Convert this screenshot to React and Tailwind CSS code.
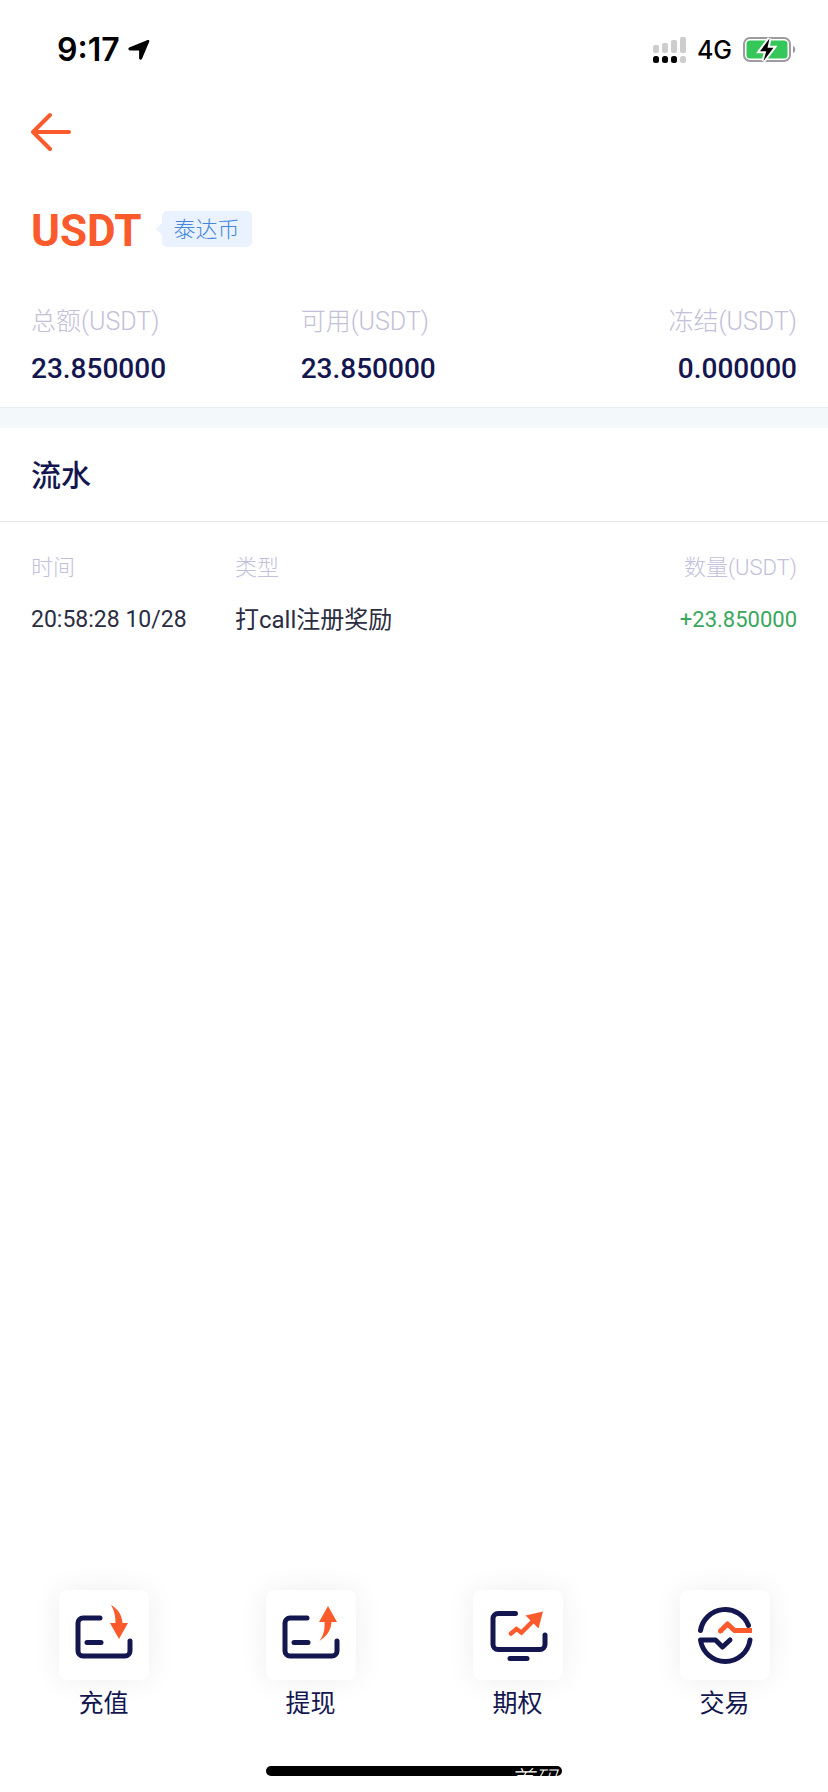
import React from 'react';

const NAVY = '#14174f';
const ORANGE = '#fb5a2c';

const StatusBar = () => (
  <div className="flex h-[98px] items-center justify-between pt-0.5 pr-[32px] pl-[57px]">
    <div className="flex items-center gap-2">
      <span className="font-[Inter,sans-serif] text-[32px] leading-9 font-semibold text-black">9:17</span>
      <svg width="22" height="22" viewBox="0 0 22 22" fill="#000">
        <path d="M1.2 8.400 19.600 1.100c1.200-.5 2.100.4 1.600 1.600l-7.200 17.100c-.6 1.400-2.900 1.200-2.900-.5v-7.800H2c-1.800 0-2.100-2.500-.8-3.100z" />
      </svg>
    </div>
    <div className="flex items-center gap-2.5">
      <svg width="34" height="28" viewBox="0 0 34 28">
        <g fill="#cdcdcd">
          <rect x="0" y="9" width="6" height="8" rx="2" />
          <rect x="9" y="7" width="6" height="10" rx="2" />
          <rect x="18" y="4" width="6" height="13" rx="2" />
          <rect x="27" y="1" width="6" height="16" rx="2" />
          <rect x="27" y="20" width="6" height="7" rx="2.500" />
        </g>
        <g fill="#000">
          <rect x="0" y="20" width="6" height="7" rx="2.500" />
          <rect x="9" y="20" width="6" height="7" rx="2.500" />
          <rect x="18" y="20" width="6" height="7" rx="2.500" />
        </g>
      </svg>
      <span className="font-[Inter,sans-serif] text-[25px] leading-8 font-medium text-black">4G</span>
      <svg width="54" height="28" viewBox="0 0 54 28">
        <rect x="2" y="2" width="46" height="23" rx="6" fill="none" stroke="#9d9aa0" strokeWidth="2" />
        <rect x="4.500" y="4.500" width="41" height="18" rx="3.500" fill="#35c759" />
        <path d="M51 10c3 .8 3 6.200 0 7z" fill="#9d9aa0" />
        <path d="M27.500 2.500 18 15.300h6.200L21.500 25 31.500 11.700h-6z" fill="#000" stroke="#fff" strokeWidth="4" paintOrder="stroke" />
      </svg>
    </div>
  </div>
);

const balances = [
  { label: '总额(USDT)', value: '23.850000' },
  { label: '可用(USDT)', value: '23.850000' },
  { label: '冻结(USDT)', value: '0.000000' },
];

const records = [
  { time: '20:58:28 10/28', type: '打call注册奖励', amount: '+23.850000' },
];

const CardOutline = () => (
  <g fill="none" stroke={NAVY} strokeWidth="5" strokeLinecap="round" strokeLinejoin="round">
    <path d="M41 28H24a5 5 0 0 0-5 5v28a5 5 0 0 0 5 5h42a5 5 0 0 0 5-5V51" />
    <path d="M28 52.500h14" />
  </g>
);

const DepositIcon = () => (
  <svg width="90" height="90" viewBox="0 0 90 90">
    <CardOutline />
    <path d="M52 15c7 4 11 10 11.500 18H69l-9 16-9-16h5.500c0-7-1-12-4.500-18z" fill={ORANGE} />
  </svg>
);

const WithdrawIcon = () => (
  <svg width="90" height="90" viewBox="0 0 90 90">
    <CardOutline />
    <path d="M53.500 51C61 46 65 40 65.500 32H71L62 16l-9 16h5.500c.5 8-1 13-5 19z" fill={ORANGE} />
  </svg>
);

const OptionsIcon = () => (
  <svg width="90" height="90" viewBox="0 0 90 90">
    <g fill="none" stroke={NAVY} strokeWidth="5" strokeLinecap="round" strokeLinejoin="round">
      <path d="M42.500 23.500H25a5 5 0 0 0-5 5v26a5 5 0 0 0 5 5h42a5 5 0 0 0 5-5V45" />
      <path d="M37 68.500h17" />
    </g>
    <path d="m38 43.500 5.500-4.500 5 3.500L61 30" fill="none" stroke={ORANGE} strokeWidth="4.500" strokeLinecap="round" />
    <path d="m52.500 25.500 17.500-4-4.500 17z" fill={ORANGE} />
  </svg>
);

const TradeIcon = () => (
  <svg width="90" height="90" viewBox="0 0 90 90">
    <g fill="none" stroke={NAVY} strokeWidth="5" strokeLinecap="round" strokeLinejoin="round">
      <path d="M20.500 40.500a25 25 0 0 1 48-5" />
      <path d="M50 50l-7.500 7-7-7h-15a25 25 0 0 0 49.500 0" />
    </g>
    <path d="m40.500 41 7-7 7 6.500H72" fill="none" stroke={ORANGE} strokeWidth="5" strokeLinejoin="round" />
    <circle cx="40.500" cy="41" r="2.500" fill={ORANGE} />
  </svg>
);

const actions = [
  { label: '充值', Icon: DepositIcon },
  { label: '提现', Icon: WithdrawIcon },
  { label: '期权', Icon: OptionsIcon },
  { label: '交易', Icon: TradeIcon },
];

const App = () => {
  return (
    <div className="flex min-h-screen flex-col bg-white font-[Roboto,'Noto_Sans_CJK_SC',sans-serif] text-[#14174f]">
      <StatusBar />

      <header className="px-[31px]">
        <button type="button" aria-label="返回" className="block h-[68px] w-[42px]">
          <svg width="42" height="40" viewBox="0 0 42 40" fill="none" stroke={ORANGE} strokeWidth="4" strokeLinecap="round" strokeLinejoin="round">
            <path d="M19 3 2 20 19 37M2 20H38" />
          </svg>
        </button>

        <div className="mt-9 flex h-[54px] items-center gap-[14px]">
          <h1 className="pt-1 text-[44px] leading-[54px] font-bold text-[#fb5a2c]">USDT</h1>
          <div className="flex items-center">
            <svg width="6" height="12" viewBox="0 0 6 12" fill="#e9f2fe">
              <path d="M6 0v12L0 6z" />
            </svg>
            <span className="rounded-[5px] bg-[#e9f2fe] px-3 pt-0.5 text-[22px] leading-[34px] font-light text-[#4586dc]">泰达币</span>
          </div>
        </div>
      </header>

      <dl className="mt-12 flex justify-between px-[31px] pb-[17px]">
        {balances.map((item, i) => (
          <div key={item.label} className={i === 2 ? 'flex-1 text-right' : 'w-[35.200%]'}>
            <dt className="text-[25px] leading-9 font-light text-[#c3c0d8]">{item.label}</dt>
            <dd className="mt-2 text-[28px] leading-[42px] font-medium">{item.value}</dd>
          </div>
        ))}
      </dl>

      <div className="h-[21px] border-t border-[#e9eef2] bg-[#f3f8fb]" />

      <section>
        <h2 className="border-b border-[#e6e6e9] px-[31px] pt-0.5 text-[30px] leading-[91px] font-medium">流水</h2>
        <table className="mt-6 w-full table-fixed">
          <thead>
            <tr className="text-[22px] leading-[44px] text-[#c3c0dc]">
              <th className="w-[235px] pl-[31px] text-left font-light">时间</th>
              <th className="text-left font-light">类型</th>
              <th className="pr-[31px] text-right font-light">数量(USDT)</th>
            </tr>
          </thead>
          <tbody>
            {records.map((row) => (
              <tr key={row.time} className="leading-[60px] text-[#2b2d42]">
                <td className="pl-[31px] text-[23px]">{row.time}</td>
                <td className="text-[24px]">{row.type}</td>
                <td className="pr-[31px] text-right text-[22px] text-[#3aa75c]">{row.amount}</td>
              </tr>
            ))}
          </tbody>
        </table>
      </section>

      <nav className="mt-auto grid grid-cols-4">
        {actions.map(({ label, Icon }) => (
          <button key={label} type="button" className="flex flex-col items-center">
            <span className="rounded-lg bg-white shadow-[0_0_30px_rgba(0,0,0,0.07)]">
              <Icon />
            </span>
            <span className="mt-1 text-[25px] leading-10">{label}</span>
          </button>
        ))}
      </nav>

      <div className="mx-auto mt-[42px] mb-4 flex h-2.5 w-[296px] justify-end overflow-hidden rounded-full bg-black pr-1">
        <span className="text-[24px] leading-7 font-light text-white italic">首码</span>
      </div>
    </div>
  );
};

export default App;
